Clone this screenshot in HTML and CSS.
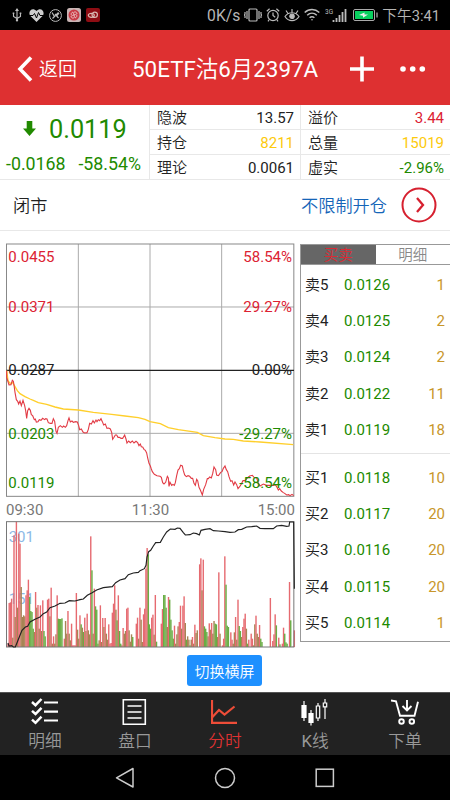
FILE: index.html
```
<!DOCTYPE html>
<html lang="zh-CN">
<head>
    <meta charset="UTF-8">
    <meta name="viewport" content="width=device-width, initial-scale=1.0">
    <title>50ETF沽6月2397A</title>
    <link rel="stylesheet" href="styles.css">
</head>
<body>
    <div class="status-bar">
        <div class="status-left">
            <svg width="10" height="14" viewBox="0 0 10 14" fill="none" stroke="#bbb" stroke-width="1.1"><path d="M5 1v11M1.5 5v3.5L5 10.5l3.5-2V5"/><path d="M5 0l2 3H3zM5 11a1.200 1.200 0 1 1 0 2.400a1.200 1.200 0 1 1 0-2.400zM.7 4.500h1.600v1.600H.7zM7.700 4.500h1.600v1.600H7.700z" fill="#bbb" stroke="none"/></svg>
            <svg width="15" height="13" viewBox="0 0 15 13"><path d="M7.500 13L1.200 6.800C-1.500 3 3-2.500 7.500 2c4.500-4.500 9 1 6.300 4.800z" fill="#ccc"/><path d="M0 6.500h4l1.500-2 2 4.500 2-5.500 1.500 3H15" fill="none" stroke="#000"/></svg>
            <svg width="13" height="13" viewBox="0 0 13 13" fill="none" stroke="#bbb"><circle cx="6.500" cy="6.500" r="5.900"/><path d="M3 3.500l2.500 4 4-4M5.500 7.500L3.500 9.500M6 5l3.500 4M7.500 7l2.500-3" stroke-width="1.200"/></svg>
            <svg width="14" height="14" viewBox="0 0 14 14"><rect width="14" height="14" rx="2.500" fill="#c9b5b5"/><circle cx="7" cy="7" r="5.500" fill="#c93a45"/><path d="M7 7c-2-4 3-4 3-1M7 7c2 4-3 4-3 1M7 7c3-2 4 2 1 3M7 7C4 9 3 5 6 4" fill="none" stroke="#e8b9b9"/></svg>
            <svg width="14" height="14" viewBox="0 0 14 14"><rect width="14" height="14" rx="2" fill="#8e0d13"/><g fill="none" stroke="#d9b8b0" stroke-width="1.200"><ellipse cx="5.300" cy="7.300" rx="3" ry="2"/><circle cx="8.700" cy="6.800" r="2.700"/></g></svg>
        </div>
        <div class="status-right">
            <span class="speed">0K/s</span>
            <svg class="vibrate" width="18" height="14" viewBox="0 0 18 14" fill="none" stroke="#bbb" stroke-width="1.200"><rect x="5" y="1" width="8" height="12" rx="1"/><path d="M3 3v8M15 3v8M1 4v2l-.6 1 .6 1v2M17 4v2l.6 1-.6 1v2"/></svg>
            <svg class="alarm" width="14" height="14" viewBox="0 0 14 14" fill="none" stroke="#bbb" stroke-width="1.200"><circle cx="7" cy="7.500" r="5.200"/><path d="M7 4.500v3l2.200 1.700M.8 3.300L3.600.8M13.200 3.300L10.400.8M3.300 11.500L2 13.300M10.700 11.500l1.300 1.800"/></svg>
            <svg class="eye" width="16" height="14" viewBox="0 0 16 14" fill="none" stroke="#bbb" stroke-width="1.200"><path d="M1 8.500c3.500-5 10.500-5 14 0c-3.500 5.500-10.500 5.500-14 0zM8 4.500V1M4 5.500L2 2.500M12 5.500l2-3"/><circle cx="8" cy="8.200" r="2.200" fill="#bbb"/></svg>
            <svg class="wifi" width="16" height="13" viewBox="0 0 16 13" fill="none" stroke="#bbb" stroke-width="1.500"><path d="M.7 4.500c4.200-4 10.400-4 14.600 0M3.200 7.300c2.800-2.600 6.800-2.600 9.600 0M5.600 9.800c1.400-1.300 3.400-1.300 4.800 0"/><circle cx="8" cy="11.700" r=".8" fill="#bbb" stroke="none"/></svg>
            <svg class="signal" width="22" height="14" viewBox="0 0 22 14"><text x="0" y="6" font-size="6.500" fill="#bbb">3G</text><path d="M8.500 14v-2M11.500 14v-4M14.500 14V7M17.500 14V4M20.500 14V1" stroke="#bbb" stroke-width="1.800"/></svg>
            <svg class="battery" width="25" height="12" viewBox="0 0 25 12"><rect x=".5" y=".5" width="21" height="11" rx="1.500" fill="none" stroke="#aaa"/><rect x="2" y="2" width="18" height="8" fill="#09cf5f"/><path d="M6 6l5.500-2.500v2H15L10 8.700v-2z" fill="#eee"/><path d="M24 3.500v5" stroke="#aaa" stroke-width="1.300"/></svg>
            <span class="clock">下午3:41</span>
        </div>
    </div>

    <div class="header">
        <svg class="back-icon" width="16" height="26" viewBox="0 0 16 26"><path d="M14 1.500L3 13l11 11.500" fill="none" stroke="#fff" stroke-width="3.600"/></svg>
        <span class="back">返回</span>
        <span class="title">50ETF沽6月2397A</span>
        <svg class="plus" width="24" height="26" viewBox="0 0 24 26"><path d="M12 .5v25M0 13h24" stroke="#fff" stroke-width="3.600"/></svg>
        <svg width="26" height="6" viewBox="0 0 26 6" fill="#fff"><circle cx="3" cy="3" r="2.800"/><circle cx="12.700" cy="3" r="2.800"/><circle cx="22.300" cy="3" r="2.800"/></svg>
    </div>

    <div class="quote">
        <div class="quote-main">
            <div class="price">
                <svg width="13" height="15" viewBox="0 0 13 15"><path d="M3.700 0h5.600v7.500H13L6.500 15 0 7.500h3.700z" fill="#218a00"/></svg>
                <span>0.0119</span>
            </div>
            <div class="change"><span>-0.0168</span><span>-58.54%</span></div>
        </div>
        <div class="quote-col">
            <div class="cell"><span>隐波</span><span>13.57</span></div>
            <div class="cell"><span>持仓</span><span class="yellow">8211</span></div>
            <div class="cell"><span>理论</span><span>0.0061</span></div>
        </div>
        <div class="quote-col">
            <div class="cell"><span>溢价</span><span class="red">3.44</span></div>
            <div class="cell"><span>总量</span><span class="yellow">15019</span></div>
            <div class="cell"><span>虚实</span><span class="green">-2.96%</span></div>
        </div>
    </div>

    <div class="state">
        <span>闭市</span>
        <span class="limit">不限制开仓</span>
        <svg width="36" height="36" viewBox="0 0 36 36" fill="none" stroke="#d6202f"><circle cx="18" cy="18" r="16.500" stroke-width="2"/><path d="M16 11l6 7-6 7" stroke-width="2.300"/></svg>
    </div>

    <div class="main">
        <div class="charts">
            <svg class="price-chart" width="289" height="254" viewBox="18 -353 867 762">
                <path d="M235-350V408M450-350V408M665-350V408M19-161H882M19 218H882" stroke="#aaa" stroke-width="3" fill="none"/>
                <rect x="19.500" y="-350" width="862" height="757" fill="none" stroke="#888" stroke-width="3"/>
                <path d="M19 29H882" stroke="#222" stroke-width="4"/>
                <polyline fill="none" stroke="#ffcf2b" stroke-width="4" points="20,30 24,60 30,68 38,66 45,78 52,90 60,99 75,108 90,115 100,119 115,126 140,131 165,139 190,145 235,148 280,155 335,161 375,166 415,171 435,176 450,183 481,189 505,201 535,207 592,215 610,225 645,231 675,235 700,236 730,241 780,244 880,252"/>
                <polyline fill="none" stroke="#e23b45" stroke-width="3.300" points="20,30 20,50 27,73 33,72 37,59 40,62 42,73 45,95 49,117 53,122 56,130 60,121 64,135 69,119 74,135 77,150 80,173 83,150 87,143 91,149 94,162 98,165 103,177 106,175 109,184 114,183 118,177 123,179 128,173 134,177 137,174 141,175 145,186 151,188 156,188 160,174 164,182 168,212 171,218 175,200 181,195 187,200 191,196 196,200 200,195 204,180 207,172 211,184 216,181 220,185 227,183 232,184 236,195 239,207 244,205 249,214 254,217 261,216 265,206 269,188 274,190 279,180 283,187 288,178 291,183 295,177 299,180 303,174 307,183 311,193 316,190 321,203 326,202 331,205 335,215 338,236 342,230 346,223 350,223 354,230 358,230 363,233 368,233 374,223 378,235 381,247 386,241 391,246 397,241 402,247 408,242 413,246 417,255 421,250 424,258 428,259 432,266 436,269 440,277 443,292 447,308 451,316 454,325 457,333 463,341 471,345 480,347 484,350 488,366 492,370 497,365 502,347 505,352 507,377 510,365 515,374 519,371 523,374 526,366 530,345 534,328 538,324 542,314 547,316 550,330 554,343 559,348 564,345 569,347 574,353 578,353 582,368 586,374 590,356 593,360 597,380 601,388 607,403 611,386 617,372 622,354 625,354 629,349 634,352 638,339 642,319 647,327 650,343 655,345 658,341 662,335 666,333 670,323 675,316 679,327 683,333 687,348 692,362 696,360 701,373 705,364 710,372 714,384 719,378 724,370 729,360 735,360 742,352 749,346 757,344 762,350 770,352 775,367 780,376 790,370 800,374 810,374 820,374 826,372 831,380 835,388 839,384 844,391 849,395 855,399 860,403 866,402 870,405 876,401 881,405"/>
                <g class="axis">
                    <text class="red" x="25" y="-297">0.0455</text>
                    <text class="red" x="25" y="-145">0.0371</text>
                    <text x="25" y="44">0.0287</text>
                    <text class="green" x="25" y="234">0.0203</text>
                    <text class="green" x="25" y="381">0.0119</text>
                </g>
                <g class="axis axis-right">
                    <text class="red" x="876" y="-297">58.54%</text>
                    <text class="red" x="876" y="-145">29.27%</text>
                    <text x="876" y="44">0.00%</text>
                    <text class="green" x="876" y="234">-29.27%</text>
                    <text class="green" x="876" y="381">-58.54%</text>
                </g>
            </svg>
            <div class="times"><span>09:30</span><span>11:30</span><span>15:00</span></div>
            <svg class="volume-chart" width="291" height="127" viewBox="18 32 873 381">
                <g class="axis">
                    <text class="vol" x="26" y="94">301</text>
                    <text class="vol" x="26" y="282">151</text>
                </g>
                <g id="bars"></g>
                <rect x="19.500" y="34" width="862" height="376" fill="none" stroke="#777" stroke-width="3"/>
                <polyline fill="none" stroke="#222" stroke-width="3.500" points="24,398 27,407 35,406 40,410 46,410 52,395 60,375 66,360 76,350 83,348 90,335 105,327 120,320 130,310 140,305 150,292 165,287 180,279 195,278 208,271 225,272 240,268 250,266 262,255 275,248 290,239 310,232 337,229 347,217 360,209 375,205 385,193 400,188 415,186 420,181 433,175 438,165 441,140 446,124 452,120 460,107 467,97 481,96 490,80 500,65 511,56 525,57 532,53 540,54 550,67 556,74 570,73 580,68 590,70 598,74 603,60 615,57 630,55 640,61 655,62 675,64 690,66 705,65 715,58 725,57 740,50 755,49 770,47 780,54 795,55 820,55 830,47 845,45 860,48 867,47 869,35 881,35 883,235"/>
            </svg>
            <button class="rotate">切换横屏</button>
        </div>

        <div class="book">
            <div class="tabs"><span class="tab active">买卖</span><span class="tab">明细</span></div>
            <div class="orders">
                <div class="order"><span>卖5</span><span class="green">0.0126</span><span class="qty">1</span></div>
                <div class="order"><span>卖4</span><span class="green">0.0125</span><span class="qty">2</span></div>
                <div class="order"><span>卖3</span><span class="green">0.0124</span><span class="qty">2</span></div>
                <div class="order"><span>卖2</span><span class="green">0.0122</span><span class="qty">11</span></div>
                <div class="order"><span>卖1</span><span class="green">0.0119</span><span class="qty">18</span></div>
            </div>
            <div class="orders buy">
                <div class="order"><span>买1</span><span class="green">0.0118</span><span class="qty">10</span></div>
                <div class="order"><span>买2</span><span class="green">0.0117</span><span class="qty">20</span></div>
                <div class="order"><span>买3</span><span class="green">0.0116</span><span class="qty">20</span></div>
                <div class="order"><span>买4</span><span class="green">0.0115</span><span class="qty">20</span></div>
                <div class="order"><span>买5</span><span class="green">0.0114</span><span class="qty">1</span></div>
            </div>
        </div>
    </div>

    <div class="nav">
        <div class="nav-item">
            <svg width="28" height="28" viewBox="0 0 28 28" fill="none" stroke="#fff" stroke-width="2.200"><path d="M13 4.500h14M13 13.700h14M13 22.500h14"/><path d="M1 4l3.500 3.200L10.500 1M1 12.800L4.500 16l6-6.200M1 21.600l3.500 3.200 6-6.200" stroke-width="2.500"/></svg>
            <span>明细</span>
        </div>
        <div class="nav-item">
            <svg width="28" height="28" viewBox="0 0 28 28" fill="none" stroke="#fff" stroke-width="1.600"><path d="M2.300 1.800h22v24.500h-22zM6.500 8h14M6.500 14h14M6.500 20h14"/></svg>
            <span>盘口</span>
        </div>
        <div class="nav-item active">
            <svg width="28" height="28" viewBox="0 0 28 28" fill="none" stroke="#ee4d38" stroke-width="2.200"><path d="M1 2v22.800h25"/><path d="M1 19.500l7-7.500 5.500 4.500L23.500 8.500"/></svg>
            <span>分时</span>
        </div>
        <div class="nav-item">
            <svg width="28" height="28" viewBox="0 0 28 28" fill="none" stroke="#fff" stroke-width="1.200"><path d="M3 3v20M10 12v15.500M17 5v3M17 20v3M24 1v4M24 8v13"/><path d="M1 7.500h4v12H1zM8 15.500h4v9H8z" fill="#fff"/><path d="M15.300 8h3.400v12h-3.400zM22.300 5h3.400v4h-3.400z"/></svg>
            <span>K线</span>
        </div>
        <div class="nav-item">
            <svg width="28" height="28" viewBox="0 0 28 28" fill="none" stroke="#fff" stroke-width="1.900"><path d="M0 2.500l5 .8 4 14.500h14.500l3.500-14M16 2v10M11.500 8l4.500 4.500L20.500 8"/><circle cx="10.500" cy="23.500" r="2.300"/><circle cx="20.800" cy="23.500" r="2.300"/></svg>
            <span>下单</span>
        </div>
    </div>

    <div class="system-nav">
        <svg width="20" height="22" viewBox="0 0 20 22"><path d="M18 1.500v18.500L1.500 10.800z" fill="none" stroke="#ccc" stroke-width="1.500" stroke-linejoin="round"/></svg>
        <svg width="22" height="22" viewBox="0 0 22 22"><circle cx="11" cy="11" r="9.500" fill="none" stroke="#ccc" stroke-width="1.500"/></svg>
        <svg width="20" height="20" viewBox="0 0 20 20"><rect x="1.200" y="1.200" width="17.200" height="17.200" fill="none" stroke="#ccc" stroke-width="1.500"/></svg>
    </div>

    <script src="volume.js"></script>
</body>
</html>
```

FILE: styles.css
```
* {
    box-sizing: border-box;
}
body {
    margin: 0;
    width: 450px;
    height: 800px;
    overflow: hidden;
    display: flex;
    flex-direction: column;
    background: #fff;
    color: #222;
    font-family: Roboto, "Noto Sans CJK SC DemiLight", "Noto Sans CJK SC", sans-serif;
    font-size: 15px;
    line-height: 1;
}
svg {
    display: block;
    flex: none;
}
.red { color: #dc2232; }
.green { color: #218a00; }
.yellow { color: #fdca0d; }

.status-bar {
    height: 30px;
    padding: 0 10px 0 12px;
    display: flex;
    align-items: center;
    justify-content: space-between;
    background: #000;
    color: #b5b5b5;
}
.status-left {
    display: flex;
    align-items: center;
    gap: 5px;
}
.status-left svg:first-child { margin-right: 2px; }
.status-right {
    display: flex;
    align-items: center;
    gap: 4px;
}
.speed {
    padding-top: 2px;
    font-size: 15.7px;
}
.wifi { margin-right: 1px; }
.signal { margin-right: 2px; }
.clock {
    padding-top: 3px;
    font-size: 14.7px;
}

.header {
    height: 75px;
    padding: 2px 24px 0 17px;
    display: flex;
    align-items: center;
    background: #de3031;
    color: #fff;
}
.back {
    margin-left: 6px;
    padding-top: 2px;
    font-size: 19px;
}
.title {
    flex: 1;
    padding: 1px 0 0 55px;
    font-size: 22.4px;
    white-space: nowrap;
}
.plus { margin-right: 26px; }

.quote {
    height: 75px;
    display: grid;
    grid-template-columns: 150px 150px 150px;
    border-bottom: 1px solid #e8e8e8;
}
.quote-main {
    color: #218a00;
    border-right: 1px solid #e8e8e8;
}
.price {
    display: flex;
    align-items: center;
    gap: 13px;
    padding: 12px 0 0 23px;
    font-size: 25.3px;
}
.price svg { margin-top: -3px; }
.change {
    display: flex;
    justify-content: space-between;
    padding: 13px 8px 0 6px;
    font-size: 17.8px;
}
.quote-col + .quote-col { border-left: 1px solid #e8e8e8; }
.cell {
    height: 25px;
    padding: 2px 6px 0 7px;
    display: flex;
    align-items: center;
    justify-content: space-between;
    border-bottom: 1px solid #e8e8e8;
}
.cell:last-child { border-bottom: 0; }

.state {
    height: 51px;
    padding: 0 13px;
    display: flex;
    align-items: center;
    border-bottom: 1px solid #e8e8e8;
    font-size: 17.2px;
}
.state span { padding-top: 3px; }
.limit {
    margin-left: auto;
    margin-right: 14px;
    color: #1565b8;
}

.main {
    height: 461px;
    padding: 12px 0 0 6px;
    display: flex;
    gap: 5px;
}
.charts {
    width: 289px;
    display: flex;
    flex-direction: column;
    align-items: flex-start;
}
.axis {
    font-size: 45px;
    fill: #222;
}
.axis-right { text-anchor: end; }
.axis .red { fill: #dc2232; }
.axis .green { fill: #218a00; }
.axis .vol { fill: #8cb9e6; }
.times {
    width: 100%;
    height: 24px;
    padding-top: 6px;
    display: flex;
    justify-content: space-between;
    color: #777;
}
.volume-chart { overflow: visible; }
.bar-r { fill: #e66a70; }
.bar-g { fill: #69ad45; }
.bar-b { fill: #a88455; }
.rotate {
    width: 75px;
    height: 31px;
    margin: 7px 0 0 181px;
    padding: 3px 0 0;
    border: 0;
    border-radius: 3px;
    background: #1e90ff;
    color: #fff;
    font: inherit;
}

.book {
    flex: 1;
    height: 398px;
    margin-top: 1px;
    border: 1px solid #999;
    border-right: 0;
}
.tabs {
    height: 20px;
    display: flex;
    border-bottom: 1px solid #999;
    font-size: 14.5px;
}
.tab {
    flex: 1;
    padding-top: 4px;
    display: flex;
    align-items: center;
    justify-content: center;
    color: #888;
}
.tab.active {
    background: #666;
    color: #dc2a34;
}
.orders { padding-top: 2px; }
.orders.buy {
    margin-top: 5px;
    padding-top: 6px;
    border-top: 1px solid #e4e4e4;
}
.order {
    height: 36.2px;
    padding: 1px 5px 0 4px;
    display: flex;
    align-items: center;
}
.order span:first-child { width: 39px; }
.qty {
    margin-left: auto;
    color: #c8962a;
}

.nav {
    height: 63px;
    display: grid;
    grid-template-columns: repeat(5, 1fr);
    background: #222;
    border-top: 1px solid #555;
    color: #999;
    font-size: 16.7px;
}
.nav-item {
    padding-top: 5px;
    display: flex;
    flex-direction: column;
    align-items: center;
    gap: 8px;
}
.nav-item.active { color: #dc3232; }

.system-nav {
    height: 45px;
    display: flex;
    align-items: center;
    justify-content: center;
    gap: 79px;
    background: #000;
}
```

FILE: volume.js
```
// one entry per minute: r = up, g = down, b = mixed, followed by the height
const morning = 'r10 r132 r134 r145 b28 r335 b90 r376 b118 r340 r310 b180 b90 b95 b92 r155 r170 r202 g150 g108 g105 g55 b45 r165 b118 r126 b55 r125 b48 r140 g48 g32 b0 r142 r145 b92 r178 b10 r32 b10 b38 r155 g85 g84 g84 g86 b0 r25 b78 b40 r108 b40 b20 r70 r5 r5 r5 r162 b52 b25 r95 g68 b58 g45 r88 b48 r100 b50 b38 r332 g230 b40 r175 g122 g112 g10 b20 r125 b15 r87 b60 r87 b40 b22 r68 r10 r12 r103 r130 r185 b112 g80 r155 g48 g10 b5 r57 b40 b48 r115 r118 b50 b16 b38 g30 b0 b0 r70 r88 b25 r118 b82 b15 r98 r115 r235 r297 g278';
const afternoon = 'g68 g55 r88 r97 b37 r156 g16 b0 b0 b0 r70 r114 g156 g156 g118 b60 r150 g142 g82 g50 g25 r64 b10 b38 b62 r75 r124 b55 r124 r152 b72 g22 b32 b22 g5 b22 r30 b10 r67 b42 b50 b0 r248 r266 b170 r262 g62 g55 g45 b32 r71 b52 r72 b40 b78 g70 g68 b30 r224 b40 g0 r5 r25 r272 g187 g64 g60 b0 r44 r22 b10 b44 r90 b22 r142 g63 g48 b30 r60 r85 r100 b55 g10 r22 b0 r40 r25 b5 b68 r94 b40 b30 r66 g25 g15 b0 b0 b0 b0 b0 b0 r147 b0 r18 r38 r98 g65 b0 r28 g8 b0 r10 r58 g40 g14 g10 b0 r195 g80 b0 r2 r50';

function drawBars(data, from, to) {
    const bars = data.split(' ');
    const step = (to - from) / (bars.length - 1);
    let html = '';
    bars.forEach((bar, i) => {
        const height = Number(bar.slice(1));
        const x = (from + i * step - 2.1).toFixed(1);
        html += `<rect class="bar-${bar[0]}" x="${x}" y="${410 - height}" width="4.2" height="${height}"/>`;
    });
    document.getElementById('bars').innerHTML += html;
}

drawBars(morning, 24, 445);
drawBars(afternoon, 448, 883);
```
